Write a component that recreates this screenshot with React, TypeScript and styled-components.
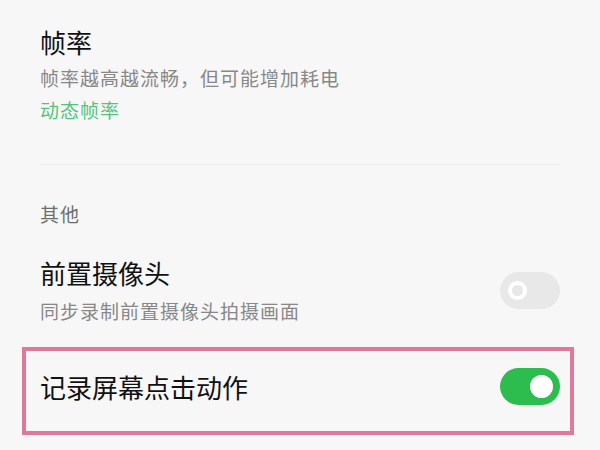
import styled, { createGlobalStyle } from 'styled-components';

const GlobalStyle = createGlobalStyle`
  html, body {
    margin: 0;
    padding: 0;
    background: #f7f7f7;
  }
  body {
    font-family: "Noto Sans CJK SC", "Noto Sans", sans-serif;
  }
`;

const Page = styled.div`
  width: 600px;
  height: 450px;
  overflow: hidden;
  box-sizing: border-box;
  padding: 24px 40px 0 40px;
  background: #f7f7f7;
`;

const Item = styled.div<{ $highlight?: boolean }>`
  display: flex;
  align-items: center;
  justify-content: space-between;
  ${(p) =>
    p.$highlight &&
    `
    margin: 22px -14px 0 -18px;
    padding: 17px 10px 26px 14px;
    border: 4px solid #e0789a;
  `}
`;

const TextBlock = styled.div`
  display: flex;
  flex-direction: column;
`;

const Title = styled.div`
  font-size: 26px;
  line-height: 36px;
  color: #111111;
`;

const Summary = styled.div<{ $accent?: boolean }>`
  margin-top: 4px;
  font-size: 19px;
  line-height: 28px;
  letter-spacing: 1px;
  color: ${(p) => (p.$accent ? '#52c47c' : '#888888')};
`;

const Divider = styled.div`
  height: 1px;
  margin-top: 40px;
  background: #eeeeee;
`;

const SectionLabel = styled.div`
  margin: 35px 0 27px;
  font-size: 19px;
  line-height: 28px;
  letter-spacing: 1px;
  color: #6e6e6e;
`;

const Track = styled.div<{ $on?: boolean }>`
  flex: none;
  display: flex;
  align-items: center;
  justify-content: ${(p) => (p.$on ? 'flex-end' : 'flex-start')};
  box-sizing: border-box;
  width: 60px;
  height: 37px;
  padding: 0 ${(p) => (p.$on ? '7px' : '8px')};
  border-radius: 19px;
  background: ${(p) => (p.$on ? '#2dbd4f' : '#e8e8e8')};
`;

const Knob = styled.div<{ $on?: boolean }>`
  box-sizing: border-box;
  width: ${(p) => (p.$on ? '23px' : '19px')};
  height: ${(p) => (p.$on ? '23px' : '19px')};
  border-radius: 50%;
  background: ${(p) => (p.$on ? '#ffffff' : '#e8e8e8')};
  border: ${(p) => (p.$on ? 'none' : '4px solid #ffffff')};
`;

const Toggle = ({ on }: { on?: boolean }) => (
  <Track $on={on}>
    <Knob $on={on} />
  </Track>
);

const App = () => {
  return (
    <Page>
      <GlobalStyle />
      <TextBlock>
        <Title>帧率</Title>
        <Summary>帧率越高越流畅，但可能增加耗电</Summary>
        <Summary $accent>动态帧率</Summary>
      </TextBlock>
      <Divider />
      <SectionLabel>其他</SectionLabel>
      <Item>
        <TextBlock>
          <Title>前置摄像头</Title>
          <Summary style={{ marginTop: 6 }}>同步录制前置摄像头拍摄画面</Summary>
        </TextBlock>
        <Toggle />
      </Item>
      <Item $highlight>
        <Title>记录屏幕点击动作</Title>
        <Toggle on />
      </Item>
    </Page>
  );
};

export default App;
